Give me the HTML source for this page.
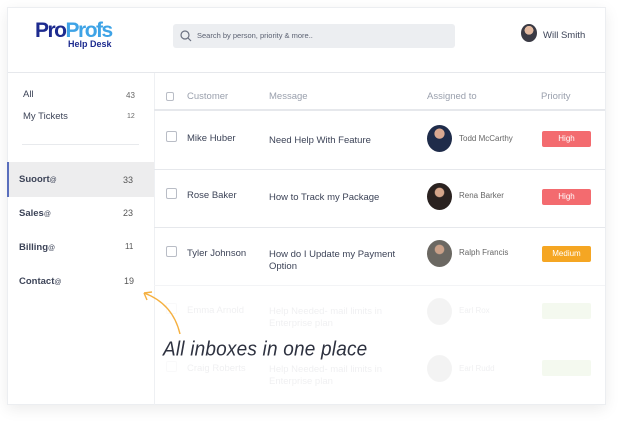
<!DOCTYPE html>
<html><head><meta charset="utf-8"><style>
*{margin:0;padding:0;box-sizing:border-box}
body{width:625px;height:426px;background:#fff;font-family:"Liberation Sans",sans-serif;position:relative;overflow:hidden;color:#3d4458}
.a{position:absolute;white-space:nowrap}
.card{position:absolute;left:7px;top:7px;width:599px;height:398px;background:#fff;box-shadow:0 4px 14px rgba(0,0,0,.08);border:1px solid #eceef1}
.hl{position:absolute;height:1px;background:#e6e8ec}
.cb{position:absolute;width:11px;height:11px;border:1px solid #b9bdc6;border-radius:2px;background:#fff}
.av{position:absolute;width:25px;height:27px;border-radius:50%;overflow:hidden}
.pill{position:absolute;width:49px;height:16px;border-radius:2px;color:#fff;font-size:8px;text-align:center;line-height:16px}
</style></head><body>
<div class="card"></div>
<div class="a" style="left:35px;top:19px;font-size:21px;font-weight:bold;letter-spacing:-1.5px;color:#1d2b8f">Pro<span style="color:#3ea3e6">Profs</span></div>
<div class="a" style="left:68px;top:39px;font-size:9px;font-weight:bold;color:#1d2b8f">Help Desk</div>
<div class="a" style="left:173px;top:24px;width:282px;height:24px;background:#eceef1;border-radius:3px"></div>
<svg class="a" style="left:180px;top:30px" width="12" height="12" viewBox="0 0 12 12"><circle cx="5" cy="5" r="4" fill="none" stroke="#6b7080" stroke-width="1.2"/><path d="M8 8L11 11" stroke="#6b7080" stroke-width="1.2"/></svg>
<div class="a" style="left:197px;top:31px;font-size:7.5px;color:#5c6272">Search by person, priority &amp; more..</div>
<div class="av" style="left:521px;top:24px;width:16px;height:18px;background:radial-gradient(circle at 50% 35%,#e2b9a0 0 30%,#3a3a44 32%)"></div>
<div class="a" style="left:543px;top:30px;font-size:9.5px;color:#3d4458">Will Smith</div>
<div class="hl" style="left:8px;top:72px;width:597px"></div>
<div class="a" style="left:154px;top:73px;width:1px;height:332px;background:#eef0f3"></div>
<div class="a" style="left:23px;top:89px;font-size:9.5px">All</div><div class="a" style="left:126px;top:91px;font-size:8px;color:#666">43</div>
<div class="a" style="left:23px;top:111px;font-size:9.5px">My Tickets</div><div class="a" style="left:127px;top:113px;font-size:7px;color:#666">12</div>
<div class="hl" style="left:22px;top:144px;width:117px;background:#e8eaed"></div>
<div class="a" style="left:7px;top:162px;width:147px;height:35px;background:#ededee;border-left:2px solid #5a6fbd"></div>
<div class="a" style="left:19px;top:174px;font-size:9.5px;font-weight:bold">Suoort<span style="font-size:7px;font-weight:normal">@</span></div><div class="a" style="left:123px;top:175px;font-size:9px;color:#555">33</div>
<div class="a" style="left:19px;top:208px;font-size:9.5px;font-weight:bold">Sales<span style="font-size:7px;font-weight:normal">@</span></div><div class="a" style="left:123px;top:208px;font-size:9px;color:#555">23</div>
<div class="a" style="left:19px;top:242px;font-size:9.5px;font-weight:bold">Billing<span style="font-size:7px;font-weight:normal">@</span></div><div class="a" style="left:125px;top:242px;font-size:8px;color:#555">11</div>
<div class="a" style="left:19px;top:276px;font-size:9.5px;font-weight:bold">Contact<span style="font-size:7px;font-weight:normal">@</span></div><div class="a" style="left:124px;top:276px;font-size:9px;color:#555">19</div>
<div class="cb" style="left:166px;top:92px;width:8px;height:9px"></div>
<div class="a" style="left:187px;top:91px;font-size:9.5px;color:#9aa0ad">Customer</div>
<div class="a" style="left:269px;top:91px;font-size:9.5px;color:#9aa0ad">Message</div>
<div class="a" style="left:427px;top:91px;font-size:9.5px;color:#9aa0ad">Assigned to</div>
<div class="a" style="left:541px;top:91px;font-size:9.5px;color:#9aa0ad">Priority</div>
<div class="hl" style="left:154px;top:109px;width:451px;height:2px"></div>
<div class="cb" style="left:166px;top:131px"></div>
<div class="a" style="left:187px;top:133px;font-size:9.5px">Mike Huber</div>
<div class="a" style="left:269px;top:135px;font-size:9.5px">Need Help With Feature</div>
<div class="av" style="left:427px;top:125px;background:radial-gradient(circle at 50% 32%,#d9a890 0 22%,#1f2c4a 24%)"></div>
<div class="a" style="left:459px;top:134px;font-size:8px;color:#666">Todd McCarthy</div>
<div class="pill" style="left:542px;top:131px;background:#f36b6f">High</div>
<div class="hl" style="left:154px;top:169px;width:451px"></div>
<div class="cb" style="left:166px;top:188px"></div>
<div class="a" style="left:187px;top:190px;font-size:9.5px">Rose Baker</div>
<div class="a" style="left:269px;top:192px;font-size:9.5px">How to Track my Package</div>
<div class="av" style="left:427px;top:183px;background:radial-gradient(circle at 50% 35%,#d4a58a 0 20%,#2a2220 24%)"></div>
<div class="a" style="left:459px;top:191px;font-size:8px;color:#666">Rena Barker</div>
<div class="pill" style="left:542px;top:189px;background:#f36b6f">High</div>
<div class="hl" style="left:154px;top:227px;width:451px"></div>
<div class="cb" style="left:166px;top:246px"></div>
<div class="a" style="left:187px;top:248px;font-size:9.5px">Tyler Johnson</div>
<div class="a" style="left:269px;top:249px;font-size:9.5px;line-height:12px">How do I Update my Payment<br>Option</div>
<div class="av" style="left:427px;top:240px;background:radial-gradient(circle at 50% 35%,#c9a088 0 20%,#6b6862 24%)"></div>
<div class="a" style="left:459px;top:248px;font-size:8px;color:#666">Ralph Francis</div>
<div class="pill" style="left:542px;top:246px;background:#f5a623">Medium</div>
<div class="hl" style="left:154px;top:285px;width:451px;background:#f3f4f6"></div>
<div style="opacity:.08">
<div class="cb" style="left:166px;top:303px"></div>
<div class="a" style="left:187px;top:305px;font-size:9.5px">Emma Arnold</div>
<div class="a" style="left:269px;top:306px;font-size:9.5px;line-height:12px">Help Needed- mail limits in<br>Enterprise plan</div>
<div class="av" style="left:427px;top:298px;background:#777"></div>
<div class="a" style="left:459px;top:306px;font-size:8px">Earl Rox</div>
<div class="pill" style="left:542px;top:303px;background:#7bc043"></div>
<div class="cb" style="left:166px;top:361px"></div>
<div class="a" style="left:187px;top:363px;font-size:9.5px">Craig Roberts</div>
<div class="a" style="left:269px;top:364px;font-size:9.5px;line-height:12px">Help Needed- mail limits in<br>Enterprise plan</div>
<div class="av" style="left:427px;top:355px;background:#777"></div>
<div class="a" style="left:459px;top:364px;font-size:8px">Earl Rudd</div>
<div class="pill" style="left:542px;top:360px;background:#7bc043"></div>
</div>
<svg class="a" style="left:138px;top:287px" width="50" height="50" viewBox="0 0 50 50"><path d="M42 47C38 30 28 14 6 6" fill="none" stroke="#f5b040" stroke-width="1.4"/><path d="M6 6L14 5M6 6L9 13" fill="none" stroke="#f5b040" stroke-width="1.4"/></svg>
<div class="a" style="left:163px;top:339px;font-size:19px;font-style:italic;font-family:'Liberation Sans',sans-serif;color:#2e3240;letter-spacing:0.2px;transform:scaleY(1.05)">All inboxes in one place</div>
</body></html>
